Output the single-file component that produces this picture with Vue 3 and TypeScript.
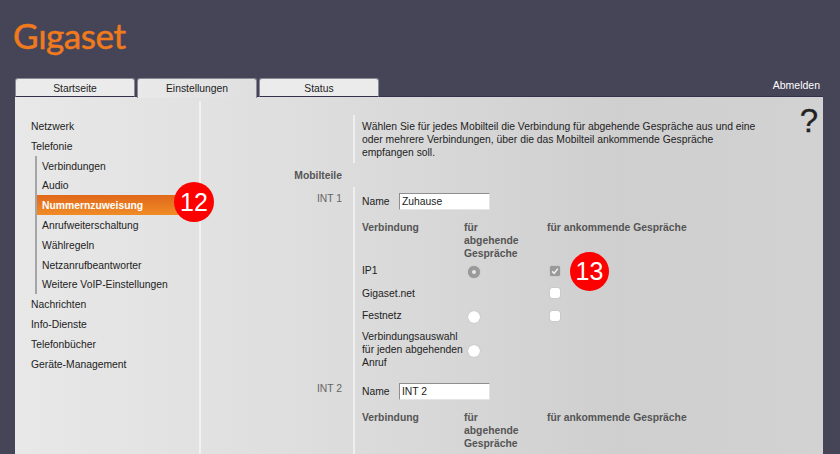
<script setup lang="ts">
interface Conn { label: string[]; radio?: 'on' | 'off'; check?: 'on' | 'off'; h: number }
const sub = ['Verbindungen', 'Audio', 'Nummernzuweisung', 'Anrufweiterschaltung', 'Wählregeln', 'Netzanrufbeantworter', 'Weitere VoIP-Einstellungen']
const after = ['Nachrichten', 'Info-Dienste', 'Telefonbücher', 'Geräte-Management']
const conns: Conn[] = [
  { label: ['IP1'], radio: 'on', check: 'on', h: 23 },
  { label: ['Gigaset.net'], check: 'off', h: 22 },
  { label: ['Festnetz'], radio: 'off', check: 'off', h: 23 },
  { label: ['Verbindungsauswahl', 'für jeden abgehenden', 'Anruf'], radio: 'off', h: 39 },
]
</script>

<template>
  <div class="page">
    <header class="top">
      <div class="logo">G<span class="dotless">i</span>gaset</div>
      <div class="tabbar">
        <div class="tab">Startseite</div>
        <div class="tab active">Einstellungen</div>
        <div class="tab">Status</div>
        <div class="logout">Abmelden</div>
      </div>
    </header>
    <main class="panel">
      <nav class="side">
        <div class="item">Netzwerk</div>
        <div class="item">Telefonie</div>
        <div class="sub">
          <div v-for="s in sub" :key="s" class="item" :class="{ current: s === 'Nummernzuweisung' }">{{ s }}</div>
        </div>
        <div v-for="s in after" :key="s" class="item">{{ s }}</div>
      </nav>
      <section class="content">
        <div class="help">?</div>
        <div class="row intro">
          <div class="lab"></div>
          <div class="body">Wählen Sie für jedes Mobilteil die Verbindung für abgehende Gespräche aus und eine<br>oder mehrere Verbindungen, über die das Mobilteil ankommende Gespräche<br>empfangen soll.</div>
        </div>
        <div class="heading">Mobilteile</div>
        <div class="row first">
          <div class="lab int">INT 1</div>
          <div class="body">
            <div class="name"><span>Name</span><input class="field" value="Zuhause"></div>
            <div class="grid head">
              <div>Verbindung</div>
              <div>für<br>abgehende<br>Gespräche</div>
              <div>für ankommende Gespräche</div>
            </div>
            <div v-for="c in conns" :key="c.label[0]" class="grid conn" :style="{ height: c.h + 'px' }">
              <div class="conn-label"><div v-for="l in c.label" :key="l">{{ l }}</div></div>
              <div class="cell"><span v-if="c.radio" class="radio" :class="c.radio"></span></div>
              <div class="cell"><span v-if="c.check" class="check" :class="c.check">
                <svg v-if="c.check === 'on'" viewBox="0 0 10 10" width="10" height="10"><path d="M2.2 5.4 4.2 7.4 7.8 2.6" fill="none" stroke="#f2f2f2" stroke-width="1.5"/></svg>
              </span></div>
            </div>
          </div>
        </div>
        <div class="row second">
          <div class="lab int">INT 2</div>
          <div class="body">
            <div class="name"><span>Name</span><input class="field" value="INT 2"></div>
            <div class="grid head">
              <div>Verbindung</div>
              <div>für<br>abgehende<br>Gespräche</div>
              <div>für ankommende Gespräche</div>
            </div>
          </div>
        </div>
      </section>
      <div class="badge b12">12</div>
      <div class="badge b13">13</div>
    </main>
  </div>
</template>

<style>
html, body { margin: 0; background: #464558; overflow: hidden; }
</style>

<style scoped>
.page { width: 840px; height: 454px; overflow: hidden; font-family: "Liberation Sans", Arial, sans-serif; font-size: 10.35px; color: #222; background: #464558; }
.top { height: 97px; display: flex; flex-direction: column; box-sizing: border-box; }
.logo { height: 78px; box-sizing: border-box; padding: 12px 0 0 13px; font-family: Lato, sans-serif; font-size: 35px; line-height: 46px; color: #f07a1e; letter-spacing: -0.45px; -webkit-text-stroke: 0.5px #f07a1e; }
.dotless { display: inline-block; clip-path: inset(40% 0 0 0); }
.tabbar { display: flex; gap: 2px; padding-left: 15px; height: 19px; position: relative; z-index: 1; }
.tab { width: 120px; box-sizing: border-box; height: 19px; background: #ebebeb; border: 1px solid #8a8a96; border-bottom: 1px solid #33324a; border-radius: 3px 3px 0 0; text-align: center; line-height: 19px; color: #222; }
.tab.active { background: linear-gradient(90deg, #e9e9e9, #dfdfdf); border-bottom: none; height: 20px; }
.logout { position: absolute; right: 20px; top: 0; color: #fff; line-height: 14px; font-size: 10.5px; }
.panel { position: relative; margin-left: 15px; width: 808px; height: 357px; display: flex; background: linear-gradient(90deg, #e8e8e8 0%, #dedede 35%, #cfcfcf 75%, #d2d2d2 100%); box-shadow: 0 -1px 0 #33324a; }
.side { width: 186px; height: 353px; margin-top: 4px; box-sizing: border-box; padding-top: 15px; border-right: 2px solid #f2f2f2; flex: none; }
.item { height: 19.8px; line-height: 21px; padding-left: 16px; }
.sub { margin-left: 20px; border-left: 2px solid #a5a5a5; width: 163px; }
.sub .item { padding-left: 5px; }
.sub .current { background: linear-gradient(180deg, #e0681a, #f08c26); color: #fff; font-weight: 700; }
.content { flex: 1; position: relative; padding-top: 18px; }
.help { position: absolute; right: 5px; top: 6px; font-size: 33px; line-height: 36px; color: #222; -webkit-text-stroke: 0.3px #222; }
.row { display: flex; }
.lab { width: 141px; text-align: right; padding-right: 11px; flex: none; }
.int { color: #666; padding-top: 5px; line-height: 13px; }
.body { border-left: 2px solid #efefef; padding-left: 7px; line-height: 13px; }
.intro .body { height: 48px; box-sizing: border-box; padding-top: 5px; }
.heading { width: 141px; text-align: right; padding-right: 11px; font-weight: 700; color: #555; line-height: 13px; margin: 6px 0 5px; }
.name { display: flex; align-items: center; height: 28px; }
.name span { width: 37px; }
.field { width: 91px; height: 17px; box-sizing: border-box; border: 1px solid #8e8e8e; border-right-color: #e5e5e5; border-bottom-color: #e5e5e5; background: #fff; padding: 0 0 0 2px; margin: 0; font: 10.35px "Liberation Sans", sans-serif; color: #222; outline: none; }
.grid { display: grid; grid-template-columns: 102px 83px 180px; }
.head { font-weight: 700; color: #555; line-height: 13px; padding-top: 5.5px; height: 38.5px; }
.first .body { padding-bottom: 8px; }
.second .body { height: 90px; }
.conn { align-items: center; }
.conn:last-child { margin-top: 3px; }
.conn-label { white-space: nowrap; }
.cell { display: flex; align-items: center; }
.radio { width: 12px; height: 12px; border-radius: 50%; background: #fff; margin: 2px 0 0 4px; box-shadow: 0 0 1px #999; position: relative; }
.radio.on { background: #9a9a9a; }
.radio.on::after { content: ""; position: absolute; left: 4px; top: 4px; width: 4px; height: 4px; border-radius: 50%; background: #e8e8e8; }
.check { width: 10px; height: 10px; border-radius: 2px; background: #fff; margin-left: 3px; box-shadow: 0 0 1px #888; display: block; }
.check.on { background: #9a9a9a; }
.check svg { display: block; }
.badge { position: absolute; width: 40px; height: 40px; border-radius: 50%; background: #fe0000; color: #fff; font-size: 25px; line-height: 40px; text-align: center; }
.b12 { left: 159px; top: 85px; }
.b13 { left: 555px; top: 155px; width: 39px; height: 39px; line-height: 39px; }
</style>
